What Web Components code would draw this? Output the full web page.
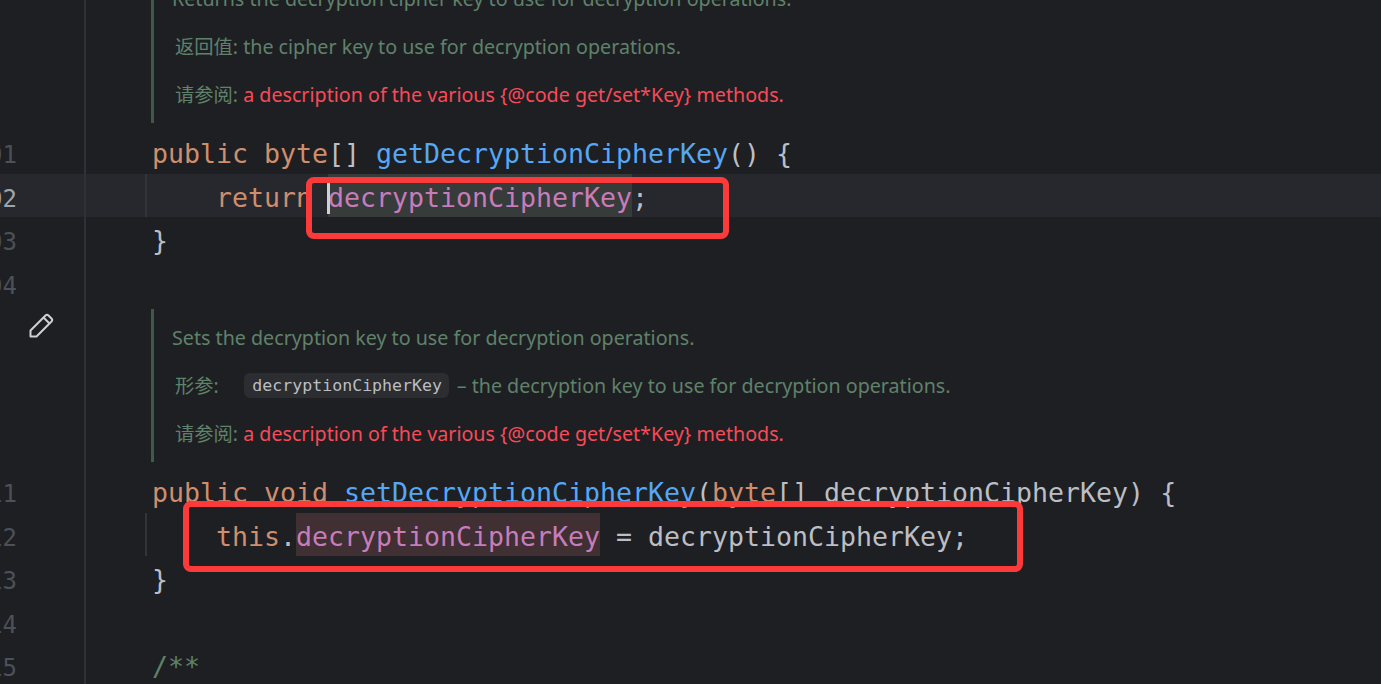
<!DOCTYPE html>
<html lang="en">
<head>
<meta charset="utf-8">
<title>Editor</title>
<style>
  html, body { margin: 0; padding: 0; background: #1e1f22; }
</style>
</head>
<body>
<editor-view>
  <doc-block>
    <doc-line><doc-text>Returns the decryption cipher key to use for decryption operations.</doc-text></doc-line>
    <doc-line><doc-label>返回值:</doc-label><doc-text> the cipher key to use for decryption operations.</doc-text></doc-line>
    <doc-line><doc-label>请参阅:</doc-label><doc-text kind="link"> a description of the various {@code get/set*Key} methods.</doc-text></doc-line>
  </doc-block>
  <code-line num="01"><code-tok kind="kw">public byte</code-tok>[] <code-tok kind="fn">getDecryptionCipherKey</code-tok>() {</code-line>
  <code-line num="02" active guide>    <code-tok kind="kw">return </code-tok><code-tok kind="field" usage="read" caret>decryptionCipherKey</code-tok>;</code-line>
  <code-line num="03">}</code-line>
  <code-line num="04"></code-line>
  <doc-block edit>
    <doc-line><doc-text>Sets the decryption key to use for decryption operations.</doc-text></doc-line>
    <doc-line><doc-label>形参:</doc-label><doc-chip>decryptionCipherKey</doc-chip><doc-text> – the decryption key to use for decryption operations.</doc-text></doc-line>
    <doc-line><doc-label>请参阅:</doc-label><doc-text kind="link"> a description of the various {@code get/set*Key} methods.</doc-text></doc-line>
  </doc-block>
  <code-line num="11"><code-tok kind="kw">public void </code-tok><code-tok kind="fn">setDecryptionCipherKey</code-tok>(<code-tok kind="kw">byte</code-tok>[] decryptionCipherKey) {</code-line>
  <code-line num="12" guide>    <code-tok kind="kw">this</code-tok>.<code-tok kind="field" usage="write">decryptionCipherKey</code-tok> = decryptionCipherKey;</code-line>
  <code-line num="13">}</code-line>
  <code-line num="14"></code-line>
  <code-line num="15"><code-tok kind="doc">/**</code-tok></code-line>
  <mark-box style="left:306px;top:177px;width:423px;height:62px"></mark-box>
  <mark-box style="left:183px;top:501px;width:840px;height:71px"></mark-box>
</editor-view>

<script>
// small helper so every element keeps its own shadow root + style
function defineEl(name, css, html) {
  class El extends HTMLElement {
    constructor() {
      super();
      this.attachShadow({ mode: 'open' });
      this.shadowRoot.innerHTML = `<style>${css}</style>${html}`;
    }
  }
  customElements.define(name, El);
}

defineEl('editor-view', `
  :host {
    display: block;
    position: relative;
    width: 1381px;
    height: 684px;
    overflow: hidden;
    background: #1e1f22;
    color: #bcbec4;
  }
  .scroll { margin-top: -35px; }
`, `<div class="scroll"><slot></slot></div>`);

class CodeLine extends HTMLElement {
  constructor() {
    super();
    this.attachShadow({ mode: 'open' });
  }
  connectedCallback() {
    this.shadowRoot.innerHTML = `
      <style>
        :host {
          display: grid;
          grid-template-columns: 84px 2px 1fr;
          height: 43.4px;
          font: 26.58px/47.4px "DejaVu Sans Mono", "Liberation Mono", monospace;
          white-space: pre;
        }
        :host([active]) { background: #26282e; }
        .gutter { overflow: hidden; width: 17px; height: 43.4px; box-sizing: border-box; padding-top: 2px;
          display: flex; justify-content: flex-end; font-size: 24px; color: #4b5059; }
        :host([active]) .gutter { color: #a1a3ab; }
        .rule { background: #2f3136; }
        .body { padding-left: 66px; position: relative; height: 43.4px; }
        :host([guide]) .body::before {
          content: ""; position: absolute; left: 59px; top: 0; bottom: 0; width: 2px; background: #313438;
        }
      </style>
      <span class="gutter">${this.getAttribute('num') || ''}</span>
      <span class="rule"></span>
      <span class="body"><slot></slot></span>`;
  }
}
customElements.define('code-line', CodeLine);

defineEl('code-tok', `
  :host { display: inline-block; position: relative; height: 43.4px; vertical-align: top; }
  :host([kind=kw]) { color: #cf8e6d; }
  :host([kind=fn]) { color: #56a8f5; }
  :host([kind=field]) { color: #c77dbb; }
  :host([kind=doc]) { color: #5f826b; }
  :host([usage=read]) { background: #373b39; }
  :host([usage=write]) { background: #402f33; }
  :host([caret])::before {
    content: ""; position: absolute; left: -1px; top: 9px; width: 3px; height: 31px; background: #ced0d6;
  }
`, `<slot></slot>`);

class DocBlock extends HTMLElement {
  constructor() {
    super();
    this.attachShadow({ mode: 'open' });
    const pencil = this.hasAttribute('edit') ? `
      <svg width="26" height="26" viewBox="0 0 26 26" fill="none" stroke="#cfd0d3" stroke-width="2" stroke-linejoin="round">
        <path d="M2.5 23.5v-6L17.5 2.5a2.2 2.2 0 0 1 3 0l3 3a2.2 2.2 0 0 1 0 3L8.5 23.5z"/>
        <path d="M15.5 4.5l6 6"/>
      </svg>` : '';
    this.shadowRoot.innerHTML = `
      <style>
        :host {
          display: grid;
          grid-template-columns: 84px 2px 1fr;
          color: #5f826b;
          font: 19.68px/48px "Noto Sans", "Noto Sans CJK SC", sans-serif;
        }
        .gutter { display: flex; justify-content: flex-end; padding: 9px 30px 0 0; }
        .rule { background: #2f3136; }
        .wrap { padding: 5px 0 7.4px 65px; }
        .block {
          border-left: 3px solid #3f5a47;
          height: 153px;
          box-sizing: border-box;
          padding: 4.6px 0 0 18px;
        }
      </style>
      <span class="gutter">${pencil}</span>
      <span class="rule"></span>
      <div class="wrap"><div class="block"><slot></slot></div></div>`;
  }
}
customElements.define('doc-block', DocBlock);

defineEl('doc-line', `:host { display: block; height: 48px; white-space: pre; }`, `<slot></slot>`);
defineEl('doc-label', `:host { padding-left: 3px; font-size: 19.3px; }`, `<slot></slot>`);
defineEl('doc-text', `:host([kind=link]) { color: #f94a59; }`, `<slot></slot>`);
defineEl('doc-chip', `
  :host {
    display: inline-block;
    vertical-align: 2px;
    margin-left: 25px;
    margin-right: 3px;
    padding: 0 6.5px 0 8.5px;
    height: 25px;
    border-radius: 6px;
    background: #2b2d30;
    color: #bcbec4;
    font: 16.6px/25px "DejaVu Sans Mono", monospace;
  }
`, `<slot></slot>`);

defineEl('mark-box', `
  :host {
    position: absolute;
    box-sizing: border-box;
    border: 6px solid #fd3a3a;
    border-radius: 8px;
  }
`, ``);
</script>
</body>
</html>
